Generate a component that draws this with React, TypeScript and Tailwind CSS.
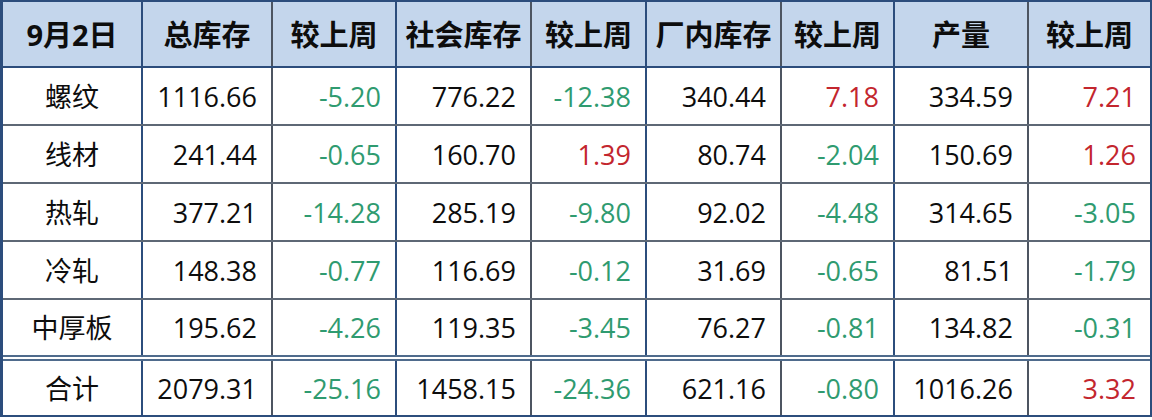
const cols = [
  { w: "w-[140px]", b: "border-r-2 border-r-[#2c4d7c]", head: "9月2日" },
  { w: "w-[130px]", b: "border-r-2 border-r-[#4d5561]", head: "总库存" },
  { w: "w-[124px]", b: "border-r-2 border-r-[#2c4d7c]", head: "较上周" },
  { w: "w-[135px]", b: "border-r-2 border-r-[#4d5561]", head: "社会库存" },
  { w: "w-[115px]", b: "border-r-2 border-r-[#2c4d7c]", head: "较上周" },
  { w: "w-[135px]", b: "border-r-2 border-r-[#4d5561]", head: "厂内库存" },
  { w: "w-[113px]", b: "border-r-2 border-r-[#2c4d7c]", head: "较上周" },
  { w: "w-[134px]", b: "border-r-2 border-r-[#4d5561]", head: "产量" },
  { w: "w-[121px]", b: "", head: "较上周" },
];

type Row = { name: string; values: string[] };

const rows: Row[] = [
  { name: "螺纹", values: ["1116.66", "-5.20", "776.22", "-12.38", "340.44", "7.18", "334.59", "7.21"] },
  { name: "线材", values: ["241.44", "-0.65", "160.70", "1.39", "80.74", "-2.04", "150.69", "1.26"] },
  { name: "热轧", values: ["377.21", "-14.28", "285.19", "-9.80", "92.02", "-4.48", "314.65", "-3.05"] },
  { name: "冷轧", values: ["148.38", "-0.77", "116.69", "-0.12", "31.69", "-0.65", "81.51", "-1.79"] },
  { name: "中厚板", values: ["195.62", "-4.26", "119.35", "-3.45", "76.27", "-0.81", "134.82", "-0.31"] },
];

const total: Row = {
  name: "合计",
  values: ["2079.31", "-25.16", "1458.15", "-24.36", "621.16", "-0.80", "1016.26", "3.32"],
};

function valueColor(v: string, i: number) {
  // odd columns are week-on-week changes
  if (i % 2 === 0) return "text-[#0d0d0d]";
  return v.startsWith("-") ? "text-[#2f9b70]" : "text-[#c3262e]";
}

function DataRow({ row, rowClass }: { row: Row; rowClass: string }) {
  return (
    <div className={`flex ${rowClass}`}>
      <div className={`${cols[0].w} ${cols[0].b} shrink-0 flex items-center justify-center text-[#0d0d0d]`}>
        {row.name}
      </div>
      {row.values.map((v, i) => (
        <div
          key={i}
          className={`${cols[i + 1].w} ${cols[i + 1].b} shrink-0 flex items-center justify-end pr-[14px] ${valueColor(v, i)}`}
        >
          {v}
        </div>
      ))}
    </div>
  );
}

export default function App() {
  return (
    <div
      className="w-[1152px] h-[420px] bg-white overflow-hidden text-[27px] leading-none"
      style={{ fontFamily: '"Open Sans", "Noto Sans CJK SC", sans-serif' }}
    >
      <div className="border-2 border-l-[3px] border-[#2c4d7c]">
        <div className="flex h-[66px] bg-[#c4d6ec] border-b-2 border-b-[#2c4d7c] font-bold text-[29px] text-[#0d0d0d]">
          {cols.map((c, i) => (
            <div key={i} className={`${c.w} ${c.b} shrink-0 flex items-center justify-center`}>
              {c.head}
            </div>
          ))}
        </div>
        {rows.map((r, i) => (
          <DataRow
            key={r.name}
            row={r}
            rowClass={
              i === rows.length - 1
                ? "h-[61px] border-b-[6px] border-double border-b-[#4f6b8c]"
                : "h-[58px] border-b-2 border-b-[#5e6875]"
            }
          />
        ))}
        <DataRow row={total} rowClass="h-[54px]" />
      </div>
    </div>
  );
}
